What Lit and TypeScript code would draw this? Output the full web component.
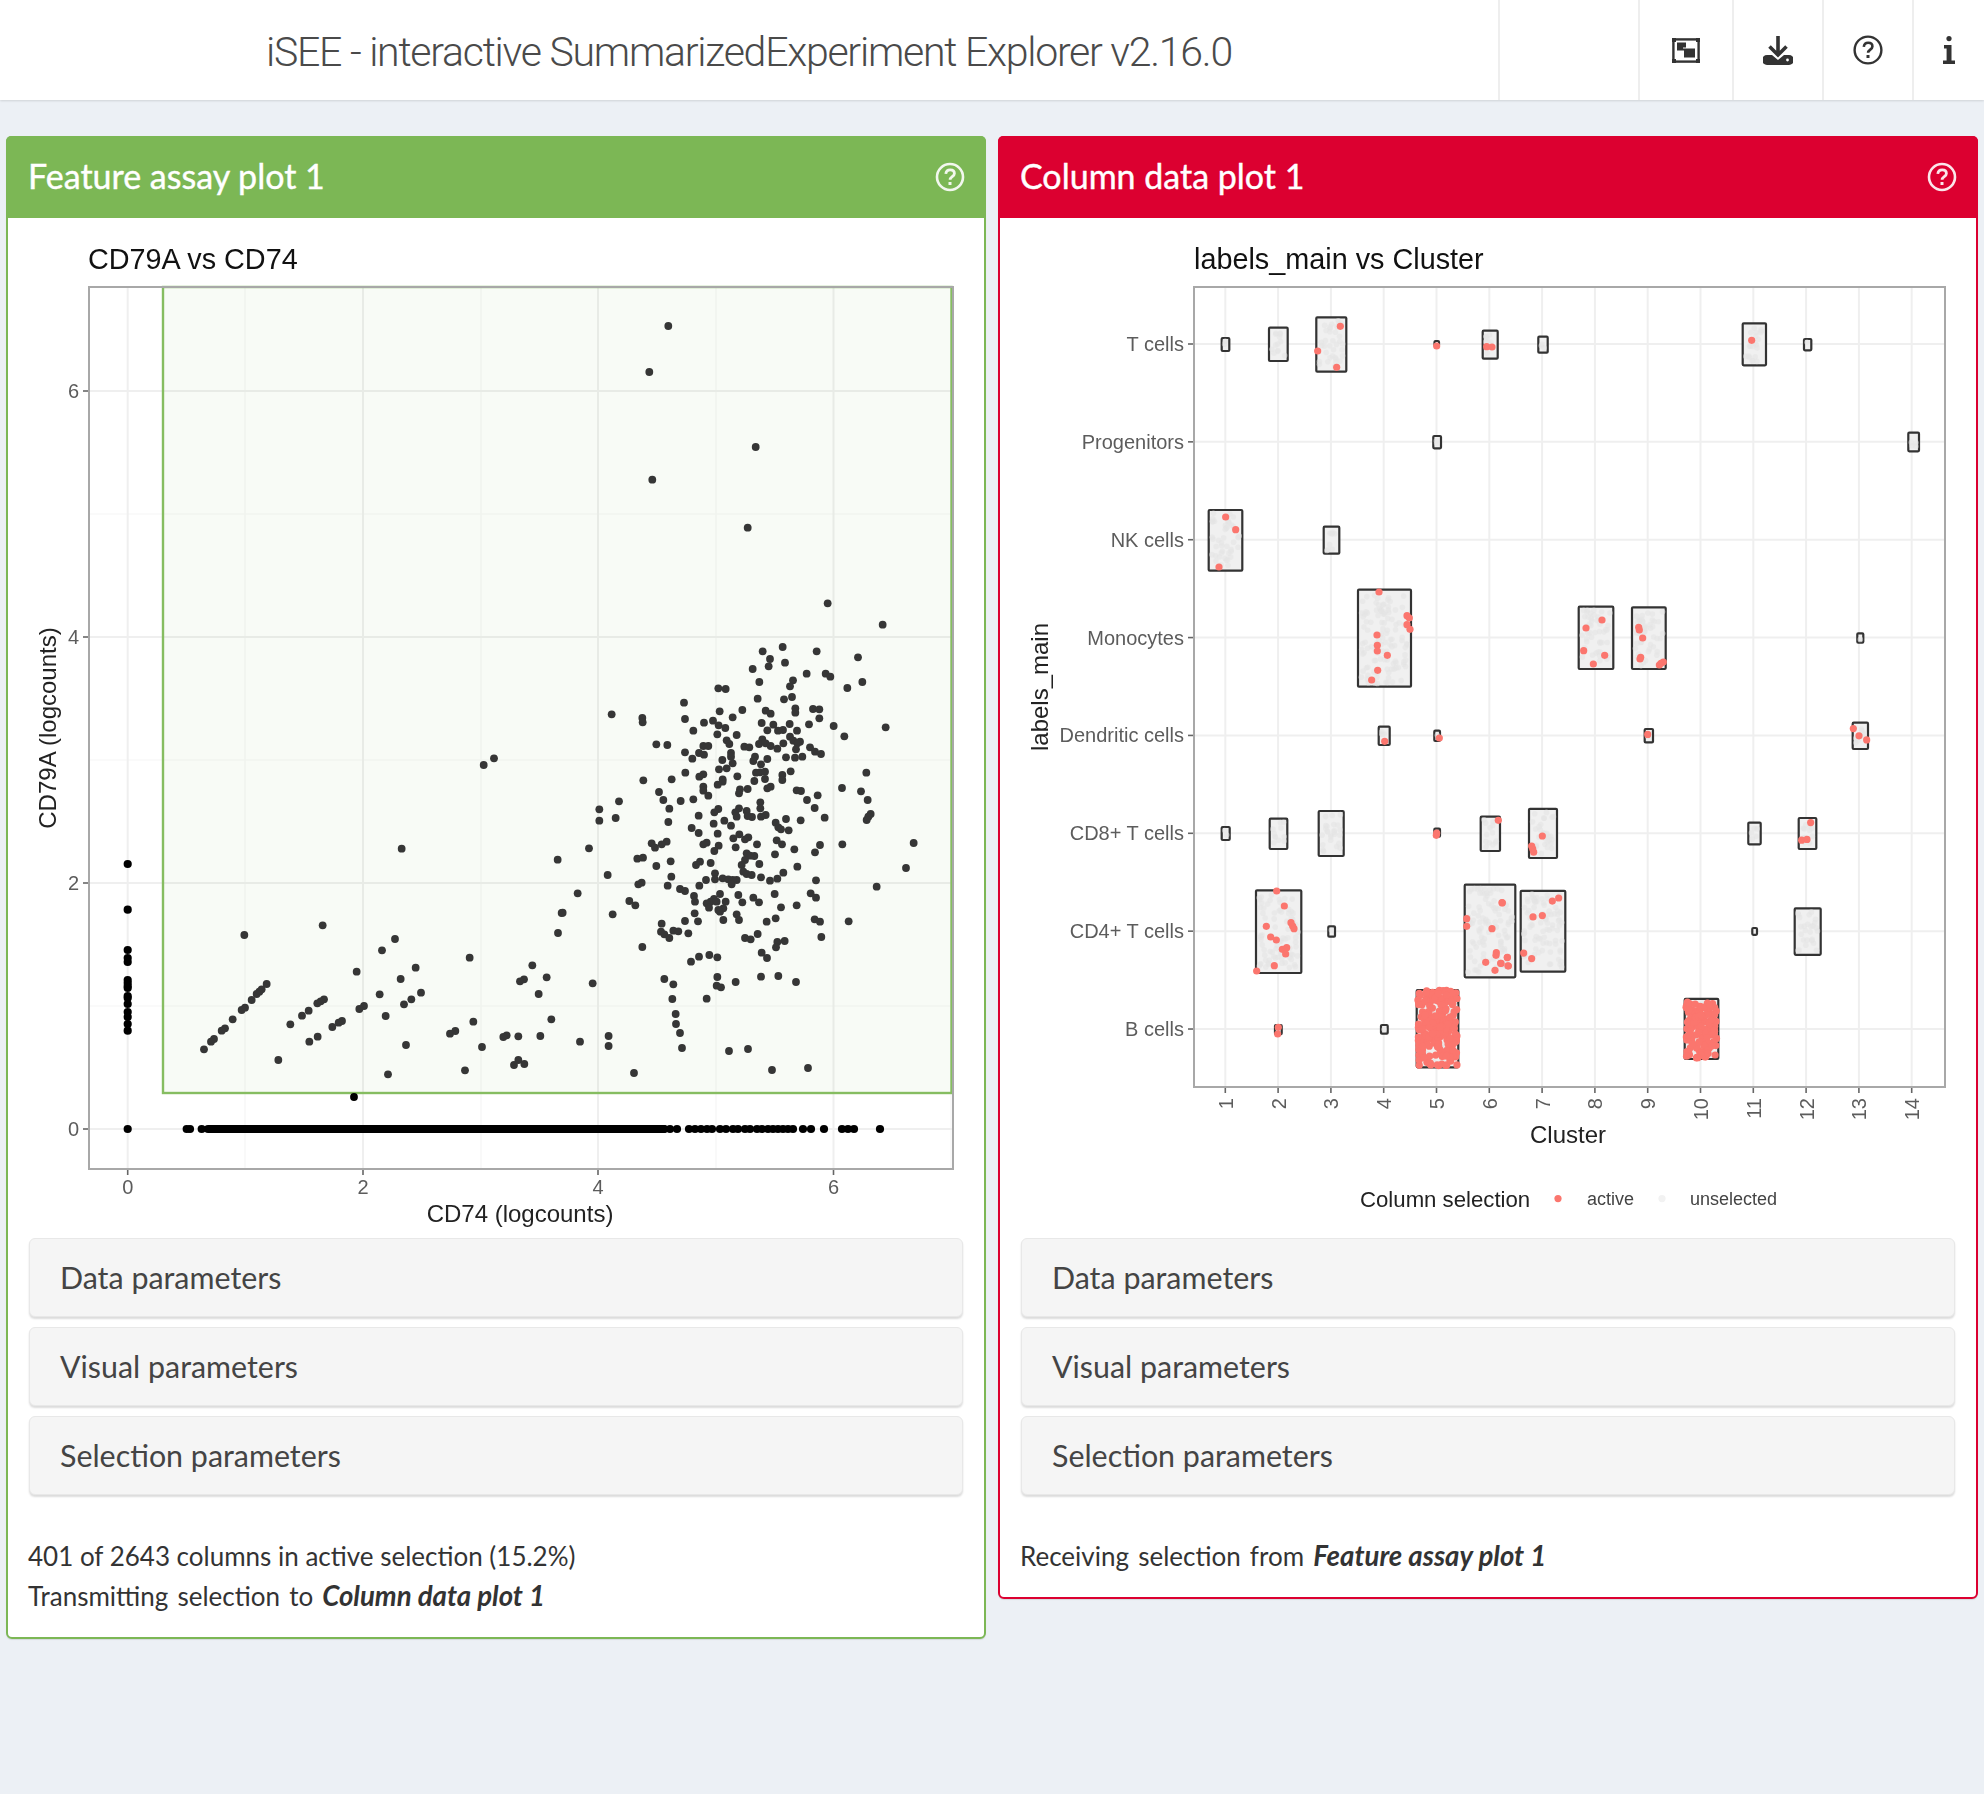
import { css, html, LitElement, svg } from "lit";
import { customElement, property } from "lit/decorators.js";

type Pt = [number, number];

// dots read off the reference, in crop coordinates (3x), mapped back to page px below
const CROP_A: Pt[] = [[803,10],[968,74],[608,154],[668,141],[770,154],[894,172],[630,177],[675,188],[626,199],[578,207],[740,221],[797,221],[811,230],[699,241],[690,259],[598,246],[907,246],[862,264],[475,265],[497,267],[593,296],[672,298],[696,291],[372,308],[706,325],[706,338],[759,327],[778,328],[479,334],[547,330],[617,332],[632,341],[155,343],[247,354],[248,367],[518,352],[375,357],[778,355],[459,362],[432,368],[605,369],[640,374],[689,372],[747,373],[821,378],[977,382],[476,376],[496,384],[400,392],[622,391],[654,392],[669,390],[711,392],[472,403],[530,405],[853,409],[690,410],[700,422],[607,418],[500,421],[508,432],[597,432],[617,430],[632,438],[652,446],[670,430],[720,425],[712,430],[289,433],[322,435],[430,438],[445,438],[553,440],[568,442],[750,442],[765,455],[783,462],[375,457],[417,459],[432,464],[513,459],[708,448],[397,476],[513,470],[585,470],[622,477],[678,472],[705,473],[727,470],[487,480],[518,490],[580,483],[603,493],[477,508],[500,505],[600,517],[588,518],[615,515],[692,514],[376,518],[919,518],[430,523],[418,530],[667,525],[667,540],[532,529],[615,537],[250,541],[335,538],[583,543],[488,538],[488,545],[473,554],[632,560],[622,565],[563,567],[430,560],[430,572],[540,568],[537,580],[710,571],[723,573],[846,564],[903,574],[297,576],[445,587],[773,586],[400,598],[362,603],[310,600],[177,604],[741,600],[923,600],[601,607],[601,625],[118,628],[328,626],[764,624],[475,627],[463,637],[537,625],[526,637],[560,633],[530,650],[563,648],[576,651],[617,645],[603,650],[416,647],[932,642],[925,650],[920,660],[794,653],[118,662],[167,654],[325,666],[678,657],[722,661],[493,662],[461,671],[513,677],[647,668],[655,682],[663,688],[686,691],[395,684],[416,699],[473,701],[538,703],[520,715],[565,712],[555,718],[650,721],[666,733],[440,728],[430,733],[320,725],[305,733],[275,730],[285,743],[591,733],[847,733],[780,735],[1061,729],[476,737],[463,753],[527,742],[703,748],[765,757],[87,745],[560,760],[583,768],[570,767],[645,763],[232,776],[249,773],[332,784],[452,789],[420,785],[408,795],[555,780],[598,792],[289,798],[545,795],[712,800],[1038,804],[143,825],[465,820],[550,815],[560,822],[575,825],[670,818],[334,830],[603,832],[488,835],[465,838],[438,840],[505,838],[530,840],[518,840],[630,842],[652,836],[768,841],[245,848],[235,853],[323,857],[515,853],[418,857],[360,867],[375,873],[950,860],[53,880],[644,882],[752,880],[768,893],[480,882],[402,888],[405,905],[535,885],[580,893],[597,907],[462,897],[452,905],[440,910],[470,905],[497,905],[547,907],[208,903],[226,916],[663,922],[710,916],[447,923],[490,925],[480,935],[475,930],[158,943],[8,938],[404,940],[530,943],[537,960],[490,960],[414,964],[375,963],[620,965],[647,955],[764,958],[780,965],[866,964],[305,971],[303,995],[313,1003],[328,1014],[340,992],[355,994],[385,1000],[593,1002],[555,1014],[572,1018],[784,1011],[674,1023],[652,1026],[648,1042],[247,1041],[605,1058],[621,1074],[417,1070],[448,1065],[472,1072],[393,1085],[313,1137],[472,1131],[603,1130],[655,1128],[98,1150],[340,1153],[527,1146],[708,1146],[470,1157],[483,1162],[337,1197],[440,1196],[347,1242]];
const CROP_B: Pt[] = [[905,86],[1373,119],[433,345],[668,316],[885,357],[846,391],[1109,413],[947,443],[1297,436],[770,455],[902,477],[1340,472],[1272,478],[1260,484],[1374,339],[1385,279],[500,492],[485,508],[478,515],[470,522],[455,540],[435,563],[425,570],[672,538],[662,544],[652,550],[839,523],[963,518],[1316,522],[934,538],[912,553],[792,558],[778,567],[626,572],[606,587],[857,588],[398,598],[1354,598],[571,613],[1120,605],[726,603],[716,608],[697,621],[375,625],[365,632],[1066,633],[1050,641],[342,657],[333,665],[653,650],[628,665],[1220,646],[1210,651],[1255,649],[1321,648],[918,675],[1146,681],[312,688],[535,720],[1255,720],[1242,735],[1273,732],[1095,751],[864,763],[1440,665]];
const PAGE_DOTS: Pt[] = [[668.3,326],[649.3,372],[755.7,447],[652.3,479.7],[747.7,527.7],[494,758.3],[483.7,765],[676,1024],[680,1033],[682,1048],[729,1051],[748,1049],[808,1068],[772,1070],[634,1073],[608.6,1036],[608.6,1046]];

const BRUSHED: Pt[] = [
  ...CROP_A.map(([x, y]): Pt => [560 + x / 3, 600 + y / 3]),
  ...CROP_B.map(([x, y]): Pt => [100 + x / 3, 820 + y / 3]),
  ...PAGE_DOTS,
];
const ZERO_COLUMN = [864, 909.7, 950, 958, 962, 980, 983, 986, 988, 996, 998, 1004, 1012, 1017, 1024, 1030.7];
const ZERO_ROW = [127.7, 186.7, 190, 201.7, 664, 670, 677, 689, 695, 701, 707, 712, 720, 726, 733, 738, 745, 750, 757, 762, 768, 773, 778, 783, 788, 793, 803, 811, 824, 842, 848, 854, 880];

// [x0, x1, y0, y1] of each grey violin-ish box
const BOXES: number[][] = [
  [1221.7,1229.3,338,351],[1269,1287.7,327.7,361],[1316.3,1346.3,317.3,371.7],[1434.5,1439,341,346],[1482.7,1497.7,330.7,358.7],[1538.3,1547.7,336.7,352.7],[1742.7,1766,323.3,365.3],[1804,1811.3,339,350.3],
  [1433.3,1441,436,448.3],[1908.3,1919,432.7,451.3],
  [1208.7,1242.3,510,570.7],[1323.7,1339.3,526.7,553.7],
  [1358,1411,589.7,686.7],[1578.7,1613.3,606.7,669],[1632,1665.7,607.3,669],[1857.3,1863.3,633.3,642.7],
  [1378.7,1389.7,726.7,745],[1434.3,1440,730.7,741],[1644.7,1653,729,742.4],[1852.7,1868,722.7,749],
  [1221.7,1229.7,827,840],[1269.7,1287.3,818.7,849],[1318.7,1343.7,811,856],[1434.3,1440,828.7,836.7],[1480.7,1500,816.7,851],[1529,1557,808.8,858],[1748.3,1760.7,822.6,844.3],[1798.7,1816.3,818,849],
  [1256,1301.3,890.3,973],[1328.3,1335,926.3,936.7],[1464.7,1515.3,884.7,977.3],[1520.7,1565.3,890.8,971.7],[1752.3,1757,928,934.8],[1794.7,1820.7,908.3,954.8],
  [1275,1281.7,1025,1034.3],[1381,1387.7,1025,1033.7],[1416.7,1458.3,990,1067.3],[1684.7,1718.3,998.9,1059],
];

const RED_LEFT: Pt[] = [[961,139],[893,213],[950,262],[1250,198],[1400,200],[1416,201],[617,711],[647,749],[597,861],[1077,936],[1161,1007],[1168,1014],[1161,1034],[1170,1048],[1071,1065],[1072,1096],[1072,1113],[1102,1126],[1073,1171],[1055,1200]];
const RED_RIGHT: Pt[] = [[755,181],[306,1020],[258,1044],[251,1112],[314,1126],[280,1152],[416,1042],[418,1050],[428,1074],[422,1132],[420,1137],[483,1150],[490,1146],[478,1155]];
const RED_LOW_LEFT: Pt[] = [[1094,124],[1258,114],[1249,406],[1250,399],[1435,361],[770,573],[793,618],[813,668],[818,678],[822,686],[739,679],[752,711],[769,720],[787,748],[800,743],[797,762],[763,797],[710,813],[1340,656],[1340,679],[1446,608],[1416,686],[1429,758],[1428,766],[1462,772],[1397,787],[1442,790],[1465,798],[1425,811],[775,982],[773,1002]];
const RED_LOW_RIGHT: Pt[] = [[443,100],[1060,83],[1077,104],[1100,116],[127,395],[95,424],[98,432],[101,442],[932,356],[905,407],[921,405],[7,589],[22,748],[3,765],[24,772],[157,584],[176,575],[99,630],[127,626],[71,735],[95,751]];

function rng(seed: number) {
  let s = seed;
  return () => {
    s = (s * 16807) % 2147483647;
    return s / 2147483647;
  };
}

function scatter(seed: number, count: number, x0: number, x1: number, y0: number, y1: number): Pt[] {
  const r = rng(seed);
  return Array.from({ length: count }, (): Pt => [x0 + r() * (x1 - x0), y0 + r() * (y1 - y0)]);
}

const RED_DOTS: Pt[] = [
  ...RED_LEFT.map(([x, y]): Pt => [1020 + x / 3, 280 + y / 3]),
  ...RED_RIGHT.map(([x, y]): Pt => [1500 + x / 3, 280 + y / 3]),
  ...RED_LOW_LEFT.map(([x, y]): Pt => [1020 + x / 3, 700 + y / 3]),
  ...RED_LOW_RIGHT.map(([x, y]): Pt => [1500 + x / 3, 700 + y / 2.904]),
  ...scatter(77, 215, 1418, 1457, 990, 1066),
  ...scatter(191, 135, 1686, 1717, 1000, 1058),
];

const SPECKLE: Pt[] = BOXES.flatMap((b, i) => {
  const area = (b[1] - b[0]) * (b[3] - b[2]);
  return scatter(i * 131 + 11, Math.floor(area / 45), b[0] + 3, b[1] - 3, b[2] + 3, b[3] - 3);
});

const ROWS = ["T cells", "Progenitors", "NK cells", "Monocytes", "Dendritic cells", "CD8+ T cells", "CD4+ T cells", "B cells"];
const rowY = (i: number) => 344 + 97.86 * i;
const colX = (k: number) => 1225.3 + 52.8 * k;

const helpIcon = () => html`
  <svg class="help" viewBox="0 0 30 30" width="30" height="30" fill="none" stroke="currentColor">
    <circle cx="15" cy="15" r="13" stroke-width="2.6"></circle>
    <path d="M10.8 11.8c.3-2.6 2-4 4.4-4 2.5 0 4.2 1.5 4.2 3.6 0 3.2-4.3 3.2-4.3 6.4" stroke-width="2.8"></path>
    <path d="M13.5 20h3v3h-3z" fill="currentColor" stroke="none"></path>
  </svg>
`;

@customElement("plot-panel")
export class PlotPanel extends LitElement {
  @property({ type: String }) heading = "";
  @property({ type: String }) tone: "green" | "red" = "green";

  static styles = css`
    :host {
      display: block;
      width: 980px;
      box-sizing: border-box;
      background: #fff;
      border: 2px solid var(--tone);
      border-radius: 6px;
      box-shadow: 0 1px 1px rgba(0, 0, 0, 0.1);
      font-family: Lato, "Noto Sans", sans-serif;
    }
    :host([tone="green"]) {
      --tone: #7cb755;
    }
    :host([tone="red"]) {
      --tone: #dc0030;
    }
    .head {
      height: 82px;
      box-sizing: border-box;
      margin: -2px -2px 0;
      padding: 0 21px 0 22px;
      background: var(--tone);
      border-radius: 5px 5px 0 0;
      display: flex;
      align-items: center;
      justify-content: space-between;
      color: #fff;
    }
    h3 {
      margin: 0 0 3px;
      font-size: 34px;
      font-weight: 400;
      -webkit-text-stroke: 0.4px #fff;
    }
    .help {
      opacity: 0.9;
      display: block;
    }
    .body {
      padding: 0 21px;
    }
    .stack {
      display: flex;
      flex-direction: column;
      gap: 10px;
    }
    .fold {
      height: 79px;
      box-sizing: border-box;
      padding: 0 0 2px 30px;
      display: flex;
      align-items: center;
      background: #f5f5f5;
      border: 1px solid #e8e8e8;
      border-radius: 6px;
      box-shadow: 0 2px 2px rgba(0, 0, 0, 0.14);
      font-size: 30.4px;
      color: #444;
    }
    .foot {
      margin-left: -1px;
      padding-top: 41px;
      padding-bottom: 21px;
      font-size: 26px;
      line-height: 40px;
      color: #333;
    }
  `;

  render() {
    return html`
      <div class="head"><h3>${this.heading}</h3>${helpIcon()}</div>
      <div class="body">
        <slot name="plot"></slot>
        <div class="stack">
          <div class="fold">Data parameters</div>
          <div class="fold">Visual parameters</div>
          <div class="fold">Selection parameters</div>
        </div>
        <div class="foot"><slot name="foot"></slot></div>
      </div>
    `;
  }
}

@customElement("app-root")
export class AppRoot extends LitElement {
  static styles = css`
    :host {
      display: block;
      min-height: 100vh;
      background: #ecf0f5;
    }
    .top {
      height: 100px;
      display: flex;
      align-items: stretch;
      background: #fff;
      box-shadow: 0 1px 2px rgba(0, 0, 0, 0.12);
    }
    .brand {
      flex: 1;
      padding: 3px 0 0 266px;
      display: flex;
      align-items: center;
      font: 300 41px Roboto, "Liberation Sans", sans-serif;
      letter-spacing: -1.25px;
      color: #4a4a4a;
    }
    .cell {
      border-left: 2px solid #eee;
      box-sizing: border-box;
      display: flex;
      align-items: center;
      justify-content: center;
      color: #333;
    }
    .cell svg {
      display: block;
    }
    .spacer {
      width: 140px;
    }
    .wide {
      width: 94px;
    }
    .norm {
      width: 90px;
    }
    .last {
      width: 72px;
    }
    .main {
      padding: 36px 6px 40px;
      display: flex;
      gap: 12px;
      align-items: flex-start;
    }
    .plot {
      display: block;
      width: 934px;
      height: 1020px;
      filter: blur(0.6px);
    }
    .plot text {
      font-family: "Liberation Sans", Arial, sans-serif;
    }
    .tick {
      font-size: 20px;
      fill: #5c5c5c;
    }
    .axis {
      font-size: 24px;
      fill: #222;
    }
    .title {
      font-size: 28.8px;
      fill: #111;
    }
    .key-title {
      font-size: 22.2px;
      fill: #222;
    }
    .key {
      font-size: 18px;
      fill: #444;
    }
    .frame {
      fill: none;
      stroke: #a8a8a8;
      stroke-width: 2;
    }
    .grid {
      stroke: #efefef;
      stroke-width: 2;
    }
    .grid-minor {
      stroke: #f5f5f5;
      stroke-width: 1.2;
    }
    .tickmark {
      stroke: #666;
      stroke-width: 1.6;
    }
    .brush {
      fill: rgba(124, 183, 85, 0.05);
      stroke: #86bd61;
      stroke-width: 2.4;
    }
    .box {
      fill: #f0f0f0;
      stroke: #333;
      stroke-width: 2.2;
    }
    .speck {
      fill: #e3e3e3;
    }
    .red {
      fill: #fb766e;
    }
    .lead {
      word-spacing: 2.5px;
    }
    b {
      font-weight: 700;
      font-style: italic;
      font-size: 27.6px;
      word-spacing: 0;
    }
  `;

  private featurePlot() {
    return svg`
      <text class="title" x="88" y="269">CD79A vs CD74</text>
      ${[245, 481, 716, 951].map((x) => svg`<line class="grid-minor" x1=${x} x2=${x} y1="287" y2="1169"></line>`)}
      ${[1006, 760, 514].map((y) => svg`<line class="grid-minor" x1="89" x2="953" y1=${y} y2=${y}></line>`)}
      ${[127.7, 363, 598, 833.5].map((x) => svg`<line class="grid" x1=${x} x2=${x} y1="287" y2="1169"></line>`)}
      ${[1129, 883, 637, 391].map((y) => svg`<line class="grid" x1="89" x2="953" y1=${y} y2=${y}></line>`)}
      <rect class="brush" x="163" y="287" width="788.5" height="806"></rect>
      ${BRUSHED.map(([x, y]) => svg`<circle cx=${x} cy=${y} r="3.9" fill="#363636"></circle>`)}
      ${ZERO_COLUMN.map((y) => svg`<circle cx="127.7" cy=${y} r="4.1" fill="#000"></circle>`)}
      ${ZERO_ROW.map((x) => svg`<circle cx=${x} cy="1129" r="4.1" fill="#000"></circle>`)}
      <circle cx="354" cy="1097" r="3.9" fill="#000"></circle>
      <line x1="208" x2="664" y1="1129" y2="1129" stroke="#000" stroke-width="8" stroke-linecap="round"></line>
      <rect class="frame" x="89" y="287" width="864" height="882"></rect>
      ${[
        [127.7, "0"],
        [363, "2"],
        [598, "4"],
        [833.5, "6"],
      ].map(
        ([x, t]) => svg`
          <line class="tickmark" x1=${x} x2=${x} y1="1170" y2="1175"></line>
          <text class="tick" x=${x} y="1194" text-anchor="middle">${t}</text>
        `,
      )}
      ${[
        [1129, "0"],
        [883, "2"],
        [637, "4"],
        [391, "6"],
      ].map(
        ([y, t]) => svg`
          <line class="tickmark" x1="83" x2="88" y1=${y} y2=${y}></line>
          <text class="tick" x="79" y=${(y as number) + 7} text-anchor="end">${t}</text>
        `,
      )}
      <text class="axis" x="520" y="1222" text-anchor="middle">CD74 (logcounts)</text>
      <text class="axis" transform="translate(56 728) rotate(-90)" text-anchor="middle">CD79A (logcounts)</text>
    `;
  }

  private columnPlot() {
    const cols = Array.from({ length: 14 }, (_, k) => k);
    return svg`
      <text class="title" x="1194" y="269">labels_main vs Cluster</text>
      ${cols.map((k) => svg`<line class="grid" x1=${colX(k)} x2=${colX(k)} y1="287" y2="1087"></line>`)}
      ${ROWS.map((_, i) => svg`<line class="grid" x1="1194" x2="1945" y1=${rowY(i)} y2=${rowY(i)}></line>`)}
      ${BOXES.map(
        (b) => svg`<rect class="box" x=${b[0]} y=${b[2]} width=${b[1] - b[0]} height=${b[3] - b[2]} rx="1"></rect>`,
      )}
      ${SPECKLE.map(([x, y]) => svg`<circle class="speck" cx=${x} cy=${y} r="2.8" opacity="0.55"></circle>`)}
      ${RED_DOTS.map(([x, y]) => svg`<circle class="red" cx=${x} cy=${y} r="3.6"></circle>`)}
      <rect class="frame" x="1194" y="287" width="751" height="800"></rect>
      ${ROWS.map(
        (name, i) => svg`
          <line class="tickmark" x1="1188" x2="1193" y1=${rowY(i)} y2=${rowY(i)}></line>
          <text class="tick" x="1184" y=${rowY(i) + 7} text-anchor="end">${name}</text>
        `,
      )}
      ${cols.map(
        (k) => svg`
          <line class="tickmark" x1=${colX(k)} x2=${colX(k)} y1="1088" y2="1093"></line>
          <text class="tick" text-anchor="end" transform="translate(${colX(k) + 7.5} 1098) rotate(-90)">${k + 1}</text>
        `,
      )}
      <text class="axis" x="1568" y="1143" text-anchor="middle">Cluster</text>
      <text class="axis" transform="translate(1048 687) rotate(-90)" text-anchor="middle">labels_main</text>
      <text class="key-title" x="1360" y="1207">Column selection</text>
      <circle class="red" cx="1558" cy="1198.6" r="3.6"></circle>
      <text class="key" x="1587" y="1205">active</text>
      <circle cx="1662" cy="1198.6" r="3.6" fill="#f2f2f2"></circle>
      <text class="key" x="1690" y="1205">unselected</text>
    `;
  }

  render() {
    return html`
      <div class="top">
        <div class="brand">iSEE - interactive SummarizedExperiment Explorer v2.16.0</div>
        <div class="cell spacer"></div>
        <div class="cell wide">
          <svg viewBox="0 0 28 25" width="28" height="25">
            <rect x="1.4" y="1.4" width="25.2" height="22.2" fill="none" stroke="currentColor" stroke-width="2.4"></rect>
            <path d="M0 0h4v4H0zM24 0h4v4h-4zM0 21h4v4H0zM24 21h4v4h-4z" fill="currentColor"></path>
            <path d="M5 4.5h9v8H5zM12 10.5h11v9H12z" fill="currentColor"></path>
            <path d="M14 9.5h-3v1h3z" fill="#fff"></path>
          </svg>
        </div>
        <div class="cell norm">
          <svg viewBox="0 0 30 29" width="30" height="29">
            <path d="M15 0v18M6.5 10.5 15 19l8.5-8.5" fill="none" stroke="currentColor" stroke-width="3.6"></path>
            <path d="M4 19h5l6 5 6-5h5a4 4 0 0 1 0 10H4a4 4 0 0 1 0-10z" fill="currentColor"></path>
            <circle cx="24.5" cy="24" r="1.4" fill="#fff"></circle>
          </svg>
        </div>
        <div class="cell norm">
          <svg viewBox="0 0 30 30" width="30" height="30" fill="none" stroke="currentColor">
            <circle cx="15" cy="15" r="13.4" stroke-width="2.4"></circle>
            <path d="M10.8 11.8c.3-2.6 2-4 4.4-4 2.5 0 4.2 1.5 4.2 3.6 0 3.2-4.3 3.2-4.3 6.4" stroke-width="2.6"></path>
            <path d="M13.5 20h3v3h-3z" fill="currentColor" stroke="none"></path>
          </svg>
        </div>
        <div class="cell last">
          <svg viewBox="0 0 12 28" width="12" height="28" fill="currentColor">
            <circle cx="6" cy="2.6" r="2.6"></circle>
            <path d="M1 9h7.5v15.5H12V28H0v-3.5h3.6V12.5H1z"></path>
          </svg>
        </div>
      </div>
      <div class="main">
        <plot-panel heading="Feature assay plot 1" tone="green">
          <svg slot="plot" class="plot" viewBox="29 218 934 1020">${this.featurePlot()}</svg>
          <div slot="foot">401 of 2643 columns in active selection (15.2%)</div>
          <div slot="foot" class="lead">Transmitting selection to <b>Column data plot 1</b></div>
        </plot-panel>
        <plot-panel heading="Column data plot 1" tone="red">
          <svg slot="plot" class="plot" viewBox="1021 218 934 1020">${this.columnPlot()}</svg>
          <div slot="foot" class="lead">Receiving selection from <b>Feature assay plot 1</b></div>
        </plot-panel>
      </div>
    `;
  }
}

declare global {
  interface HTMLElementTagNameMap {
    "app-root": AppRoot;
    "plot-panel": PlotPanel;
  }
}
